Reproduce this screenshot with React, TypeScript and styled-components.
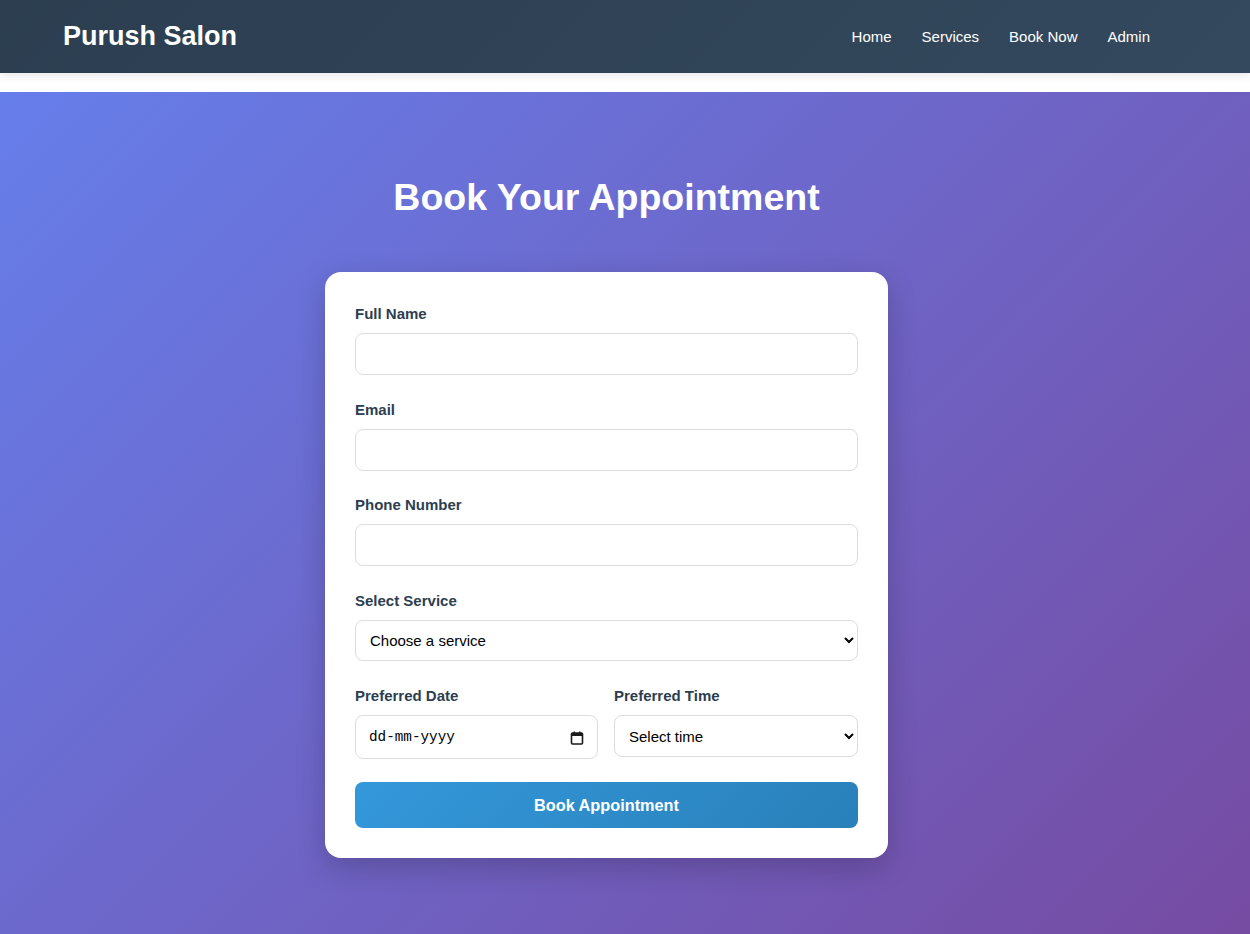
import React from "react";
import styled, { createGlobalStyle } from "styled-components";

const Global = createGlobalStyle`
  * { box-sizing: border-box; }
  html, body { margin: 0; padding: 0; }
  body {
    font-family: "Liberation Sans", Arial, sans-serif;
    background: #ffffff;
    color: #333;
  }
`;

const Header = styled.header`
  height: 73px;
  background: linear-gradient(135deg, #2c3e50, #34495e);
  box-shadow: 0 2px 10px rgba(0, 0, 0, 0.1);
  display: flex;
  align-items: center;
  justify-content: space-between;
  padding: 0 100px 0 63px;
  position: relative;
  z-index: 1;
`;

const Logo = styled.div`
  color: #ffffff;
  font-size: 27px;
  font-weight: 700;
`;

const Nav = styled.nav`
  display: flex;
  gap: 30px;
`;

const NavLink = styled.a`
  color: #ffffff;
  font-size: 15px;
  text-decoration: none;
`;

const Spacer = styled.div`
  height: 19px;
  background: #ffffff;
`;

const Hero = styled.main`
  min-height: 842px;
  background: linear-gradient(135deg, #667eea 0%, #764ba2 100%);
  padding: 82px 37px 80px 0;
  display: flex;
  flex-direction: column;
  align-items: center;
`;

const Title = styled.h1`
  margin: 0 0 52px;
  color: #ffffff;
  font-size: 37.5px;
  line-height: 46px;
  font-weight: 700;
`;

const Card = styled.form`
  width: 563px;
  background: #ffffff;
  border-radius: 16px;
  padding: 31px 30px 30px;
  box-shadow: 0 10px 30px rgba(0, 0, 0, 0.2);
`;

const Group = styled.div`
  margin-bottom: 24px;
  &:nth-child(2) {
    margin-bottom: 23px;
  }
`;

const Row = styled.div`
  display: grid;
  grid-template-columns: 243px 1fr;
  gap: 16px;
  margin-bottom: 23px;
`;

const Label = styled.label`
  display: block;
  font-size: 15px;
  font-weight: 700;
  line-height: 22px;
  color: #2c3e50;
  margin-bottom: 8px;
`;

const fieldCss = `
  display: block;
  width: 100%;
  border: 1px solid #dddddd;
  border-radius: 8px;
  background: #ffffff;
  font-size: 15px;
  color: #000;
  outline: none;
`;

const Input = styled.input`
  ${fieldCss}
  height: 42px;
  padding: 0 14px;
  font-family: "Liberation Sans", Arial, sans-serif;
`;

const DateWrap = styled.div`
  position: relative;
`;

const DateInput = styled.input`
  ${fieldCss}
  height: 44px;
  padding: 0 40px 1px 13px;
  font-family: "Liberation Mono", monospace;
  font-size: 14.3px;
  &::placeholder {
    color: #000;
    opacity: 1;
  }
`;

const CalIcon = styled.svg`
  position: absolute;
  right: 14px;
  top: 16px;
  width: 14px;
  height: 14px;
  pointer-events: none;
`;

const Select = styled.select<{ $h: number }>`
  ${fieldCss}
  height: ${(p) => p.$h}px;
  padding: 0 10px;
  font-family: "Liberation Sans", Arial, sans-serif;
`;

const Button = styled.button`
  display: block;
  width: 100%;
  height: 46px;
  border: none;
  border-radius: 8px;
  background: linear-gradient(135deg, #3498db, #2980b9);
  color: #ffffff;
  font-family: "Liberation Sans", Arial, sans-serif;
  font-size: 16.3px;
  font-weight: 700;
  cursor: pointer;
`;

export default function App() {
  return (
    <>
      <Global />
      <Header>
        <Logo>Purush Salon</Logo>
        <Nav>
          <NavLink href="#">Home</NavLink>
          <NavLink href="#">Services</NavLink>
          <NavLink href="#">Book Now</NavLink>
          <NavLink href="#">Admin</NavLink>
        </Nav>
      </Header>
      <Spacer />
      <Hero>
        <Title>Book Your Appointment</Title>
        <Card onSubmit={(e) => e.preventDefault()}>
          <Group>
            <Label>Full Name</Label>
            <Input type="text" />
          </Group>
          <Group>
            <Label>Email</Label>
            <Input type="email" />
          </Group>
          <Group>
            <Label>Phone Number</Label>
            <Input type="tel" />
          </Group>
          <Group>
            <Label>Select Service</Label>
            <Select $h={41} defaultValue="">
              <option value="">Choose a service</option>
              <option>Haircut</option>
              <option>Shave</option>
            </Select>
          </Group>
          <Row>
            <div>
              <Label>Preferred Date</Label>
              <DateWrap>
                <DateInput type="text" placeholder="dd-mm-yyyy" />
                <CalIcon viewBox="0 0 14 14">
                  <rect x="1.5" y="2" width="11" height="11" rx="1" fill="none" stroke="#1a1a1a" strokeWidth="1.6" />
                  <rect x="1.5" y="2" width="11" height="3" fill="#1a1a1a" />
                  <rect x="3.5" y="0.5" width="1.5" height="2" fill="#1a1a1a" />
                  <rect x="9" y="0.5" width="1.5" height="2" fill="#1a1a1a" />
                </CalIcon>
              </DateWrap>
            </div>
            <div>
              <Label>Preferred Time</Label>
              <Select $h={42} defaultValue="">
                <option value="">Select time</option>
                <option>10:00 AM</option>
              </Select>
            </div>
          </Row>
          <Button type="submit">Book Appointment</Button>
        </Card>
      </Hero>
    </>
  );
}
